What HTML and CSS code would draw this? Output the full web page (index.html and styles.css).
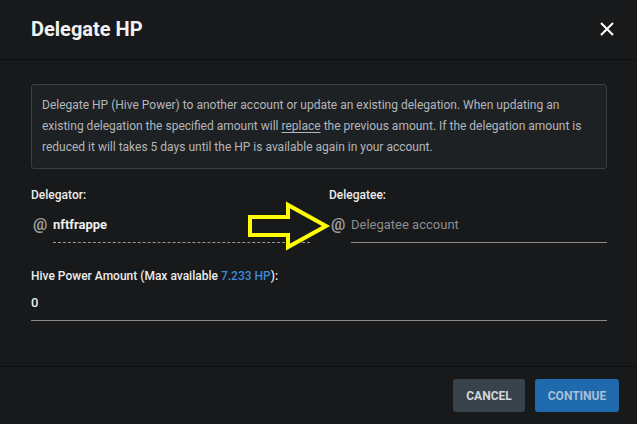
FILE: index.html
```html
<!DOCTYPE html>
<html>
<head>
<meta charset="utf-8">
<link rel="stylesheet" href="styles.css">
</head>
<body>
<div class="dialog">
  <header class="head">
    <h1 class="title">Delegate HP</h1>
    <button class="close" aria-label="Close">
      <svg width="14" height="14" viewBox="0 0 14 14"><path d="M1 1L13 13M13 1L1 13" stroke="#ffffff" stroke-width="2" fill="none"/></svg>
    </button>
  </header>
  <section class="body">
    <div class="info">Delegate HP (Hive Power) to another account or update an existing delegation. When updating an existing delegation the specified amount will <span class="ul">replace</span> the previous amount. If the delegation amount is reduced it will takes 5 days until the HP is available again in your account.</div>
    <div class="cols">
      <div class="field">
        <div class="label">Delegator:</div>
        <div class="inrow">
          <span class="at">@</span>
          <div class="input dotted"><b>nftfrappe</b></div>
        </div>
      </div>
      <div class="field">
        <div class="label">Delegatee:</div>
        <div class="inrow">
          <span class="at">@</span>
          <div class="input solid placeholder">Delegatee account</div>
        </div>
      </div>
    </div>
    <div class="field amount">
      <div class="label">Hive Power Amount (Max available <span class="link">7.233 HP</span>):</div>
      <div class="input solid value">0</div>
    </div>
    <svg class="arrow" width="86" height="50" viewBox="0 0 86 50"><polygon points="4,16 42,16 42,4 80,25 42,46 42,34 4,34" fill="#18191b" stroke="#ffff00" stroke-width="4" stroke-linejoin="miter"/></svg>
  </section>
  <footer class="foot">
    <button class="btn cancel">CANCEL</button>
    <button class="btn cont">CONTINUE</button>
  </footer>
</div>
</body>
</html>
```

FILE: styles.css
```css
html, body {
  margin: 0;
  padding: 0;
  background: #18191b;
  font-family: Roboto, "Liberation Sans", sans-serif;
  width: 637px;
  height: 424px;
  overflow: hidden;
}
.dialog {
  display: flex;
  flex-direction: column;
  height: 424px;
}
.head {
  height: 59px;
  border-bottom: 1px solid #0f1012;
  display: flex;
  align-items: center;
  justify-content: space-between;
  padding: 0 22px 0 31px;
}
.title {
  margin: 0;
  font-size: 20px;
  font-weight: 700;
  color: #f2f2f2;
  padding-bottom: 2px;
}
.close {
  background: none;
  border: 0;
  padding: 0;
  width: 16px;
  height: 16px;
  display: flex;
  align-items: center;
  justify-content: center;
  margin-top: -1px;
}
.body {
  position: relative;
  padding: 24px 30px 45px 31px;
}
.info {
  border: 1px solid #3a3f45;
  border-radius: 3px;
  background: #1e2124;
  color: #b3b6ba;
  font-size: 12px;
  line-height: 21px;
  padding: 10px 10px 10px 10px;
  height: 63px;
}
.ul {
  text-decoration: underline;
  text-decoration-color: #b3b6ba;
  text-underline-offset: 2px;
}
.cols {
  display: grid;
  grid-template-columns: 279px 278px;
  column-gap: 19px;
  margin-top: 18px;
}
.label {
  color: #ececec;
  font-size: 12px;
  font-weight: 500;
  line-height: 16px;
}
.inrow {
  display: flex;
  align-items: flex-end;
}
.at {
  width: 22px;
  flex: none;
  color: #9c9c9c;
  font-size: 16px;
  font-weight: 700;
  line-height: 20px;
  padding-bottom: 8px;
  padding-left: 2px;
  box-sizing: border-box;
}
.input {
  flex: 1;
  font-size: 13px;
  line-height: 20px;
  padding: 12px 0 7px;
  color: #eeeeee;
}
.input b {
  font-weight: 700;
}
.dotted {
  border-bottom: 1px dashed #9a9a9a;
}
.solid {
  border-bottom: 1px solid #8a8a8a;
}
.placeholder {
  color: #8b8d90;
}
.amount {
  margin-top: 25px;
}
.amount .input {
  padding: 9px 0 7px;
}
.value {
  font-weight: 500;
}
.link {
  color: #3b8ad6;
}
.arrow {
  position: absolute;
  left: 246px;
  top: 141px;
}
.foot {
  border-top: 1px solid #0f1012;
  display: flex;
  justify-content: flex-end;
  gap: 10px;
  padding: 12px 18px 0 0;
  flex: 1;
}
.btn {
  height: 33px;
  border: 0;
  border-radius: 3px;
  font-family: Roboto, "Liberation Sans", sans-serif;
  font-size: 12px;
  font-weight: 700;
  padding: 0;
}
.cancel {
  width: 72px;
  background: #38434b;
  color: #d4d7da;
}
.cont {
  width: 84px;
  background: #1f6aad;
  color: #a8bfd4;
}
```
